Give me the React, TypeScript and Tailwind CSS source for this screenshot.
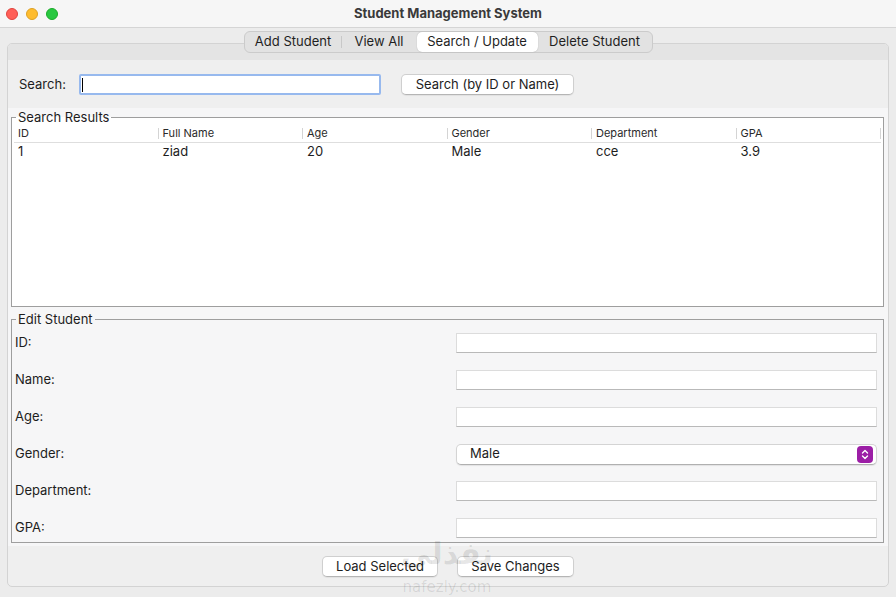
import React from 'react'

const font = { fontFamily: 'Inter, "Liberation Sans", "DejaVu Sans", sans-serif' }

const columns = ['ID', 'Full Name', 'Age', 'Gender', 'Department', 'GPA']
const rows = [['1', 'ziad', '20', 'Male', 'cce', '3.9']]

const tabs = [
  { label: 'Add Student', w: 'w-[97px]' },
  { label: 'View All', w: 'w-[75px]' },
  { label: 'Search / Update', w: 'w-[121px]', active: true },
  { label: 'Delete Student', w: 'w-[114px]' }
]

function Field() {
  return (
    <div className="h-[20px] w-[421px] border border-[#dcdcdc] border-b-[#b9b9b9] bg-white" />
  )
}

function GenderSelect() {
  return (
    <div className="flex h-[21px] w-[421px] items-center justify-between rounded-[5px] border border-[#d4d4d4] border-b-[#b0b0b0] bg-white pl-[13px] pr-[3px] shadow-[0_1px_1px_rgba(0,0,0,0.08)]">
      <span className="text-[13px] text-[#1d1d1d]">Male</span>
      <span className="flex h-[17px] w-[16px] items-center justify-center rounded-[4px] bg-[#9c1ea6]">
        <svg width="8" height="11" viewBox="0 0 8 11" fill="none" stroke="white" strokeWidth="1.4" strokeLinecap="round" strokeLinejoin="round">
          <path d="M1.5 4 L4 1.5 L6.5 4" />
          <path d="M1.5 7 L4 9.5 L6.5 7" />
        </svg>
      </span>
    </div>
  )
}

const editRows = ['ID:', 'Name:', 'Age:', 'Gender:', 'Department:', 'GPA:']

export default function App() {
  return (
    <div className="relative h-[597px] w-[896px] overflow-hidden bg-[#ececec] text-[#1d1d1d]" style={font}>
      {/* title bar */}
      <div className="relative flex h-[28px] items-center border-b border-[#d5d5d5] bg-[#f6f6f6]">
        <div className="flex gap-[8px] pl-[6px]">
          <span className="h-[12px] w-[12px] rounded-full border border-[#e0443e] bg-[#ff5f57]" />
          <span className="h-[12px] w-[12px] rounded-full border border-[#dea123] bg-[#febc2e]" />
          <span className="h-[12px] w-[12px] rounded-full border border-[#1aab29] bg-[#28c840]" />
        </div>
        <div className="absolute inset-x-0 text-center text-[13px] font-bold text-[#3a3a3a]">
          Student Management System
        </div>
      </div>

      <div className="flex flex-col px-[7px]">
        {/* tabs */}
        <div className="relative z-10 mt-[3px] flex justify-center">
          <div className="flex h-[22px] items-center rounded-[6px] border border-[#cbcbcb] bg-[#e2e2e2] text-[13px] text-[#1f1f1f]">
            {tabs.map((t, i) => (
              <div key={t.label} className={`relative flex h-full items-center justify-center ${t.w}`}>
                {t.active ? (
                  <div className="flex h-[20px] w-full items-center justify-center rounded-[5px] bg-white shadow-[0_0_1px_rgba(0,0,0,0.3)]">
                    {t.label}
                  </div>
                ) : (
                  t.label
                )}
                {i === 0 && <span className="absolute right-0 h-[12px] w-px bg-[#c8c8c8]" />}
              </div>
            ))}
          </div>
        </div>

        {/* tab content panel */}
        <div className="-mt-[10px] flex h-[544px] flex-col overflow-hidden rounded-[5px] border border-[#d3d3d3] bg-[#efefef]">
          <div className="h-[16px] shrink-0 bg-[#e4e4e4]" />

          <div className="flex h-[48px] shrink-0 items-center pl-[11px] pt-[1px] text-[13px]">
            <span className="w-[60px]">Search:</span>
            <div className="flex h-[21px] w-[302px] items-center rounded-[2px] border-2 border-[#97b9ee] bg-white pl-[1px]">
              <span className="h-[14px] w-px bg-black" />
            </div>
            <button className="ml-[20px] flex h-[21px] w-[173px] items-center justify-center rounded-[5px] border border-[#cfcfcf] border-b-[#b5b5b5] bg-white text-[13px] shadow-[0_1px_1px_rgba(0,0,0,0.06)]">
              Search (by ID or Name)
            </button>
          </div>

          <div className="flex flex-1 flex-col bg-[#f6f6f7] pb-[2px] pl-[3px] pr-[4px] pt-[4px]">
            <fieldset className="border border-[#9e9e9e] bg-white">
              <legend className="ml-[4px] px-[2px] text-[13px] leading-[10px]">Search Results</legend>
              <div className="h-[184px] px-[2px]">
                <div className="flex h-[21px] items-center border-b border-[#dedede] pt-[3px] text-[11px] text-[#2a2a2a]">
                  {columns.map((c) => (
                    <div key={c} className="flex h-[11px] flex-1 items-center border-r border-[#d4d4d4] pl-[4px]">
                      {c}
                    </div>
                  ))}
                </div>
                {rows.map((r) => (
                  <div key={r[0]} className="flex h-[17px] items-center text-[13px]">
                    {r.map((v, i) => (
                      <div key={i} className="flex-1 pl-[4px]">
                        {v}
                      </div>
                    ))}
                  </div>
                ))}
              </div>
            </fieldset>

            <fieldset className="mt-[7px] border border-[#9e9e9e]">
              <legend className="ml-[4px] px-[2px] text-[13px] leading-[10px]">Edit Student</legend>
              <div className="flex flex-col gap-[17px] pb-[4px] pl-[3px] pr-[6px] pt-[9px] text-[13px]">
                {editRows.map((l) => (
                  <div key={l} className="flex h-[20px] items-center justify-between">
                    <span>{l}</span>
                    {l === 'Gender:' ? <GenderSelect /> : <Field />}
                  </div>
                ))}
              </div>
            </fieldset>
          </div>

          <div className="flex h-[40px] shrink-0 justify-center gap-[19px] pt-[10px]">
            <button className="flex h-[21px] w-[116px] items-center justify-center rounded-[5px] border border-[#cfcfcf] border-b-[#b5b5b5] bg-white text-[13px] shadow-[0_1px_1px_rgba(0,0,0,0.06)]">
              Load Selected
            </button>
            <button className="flex h-[21px] w-[117px] items-center justify-center rounded-[5px] border border-[#cfcfcf] border-b-[#b5b5b5] bg-white text-[13px] shadow-[0_1px_1px_rgba(0,0,0,0.06)]">
              Save Changes
            </button>
          </div>
        </div>
      </div>

      {/* watermark overlay */}
      <div className="pointer-events-none absolute left-[395px] top-[536px] flex w-[104px] flex-col items-center text-[#000]/10" style={{ fontFamily: '"DejaVu Sans", sans-serif' }}>
        <span className="text-[30px] font-bold leading-[36px]">نفذلي</span>
        <span className="mt-[6px] text-[15px] leading-[18px]">nafezly.com</span>
      </div>
    </div>
  )
}
